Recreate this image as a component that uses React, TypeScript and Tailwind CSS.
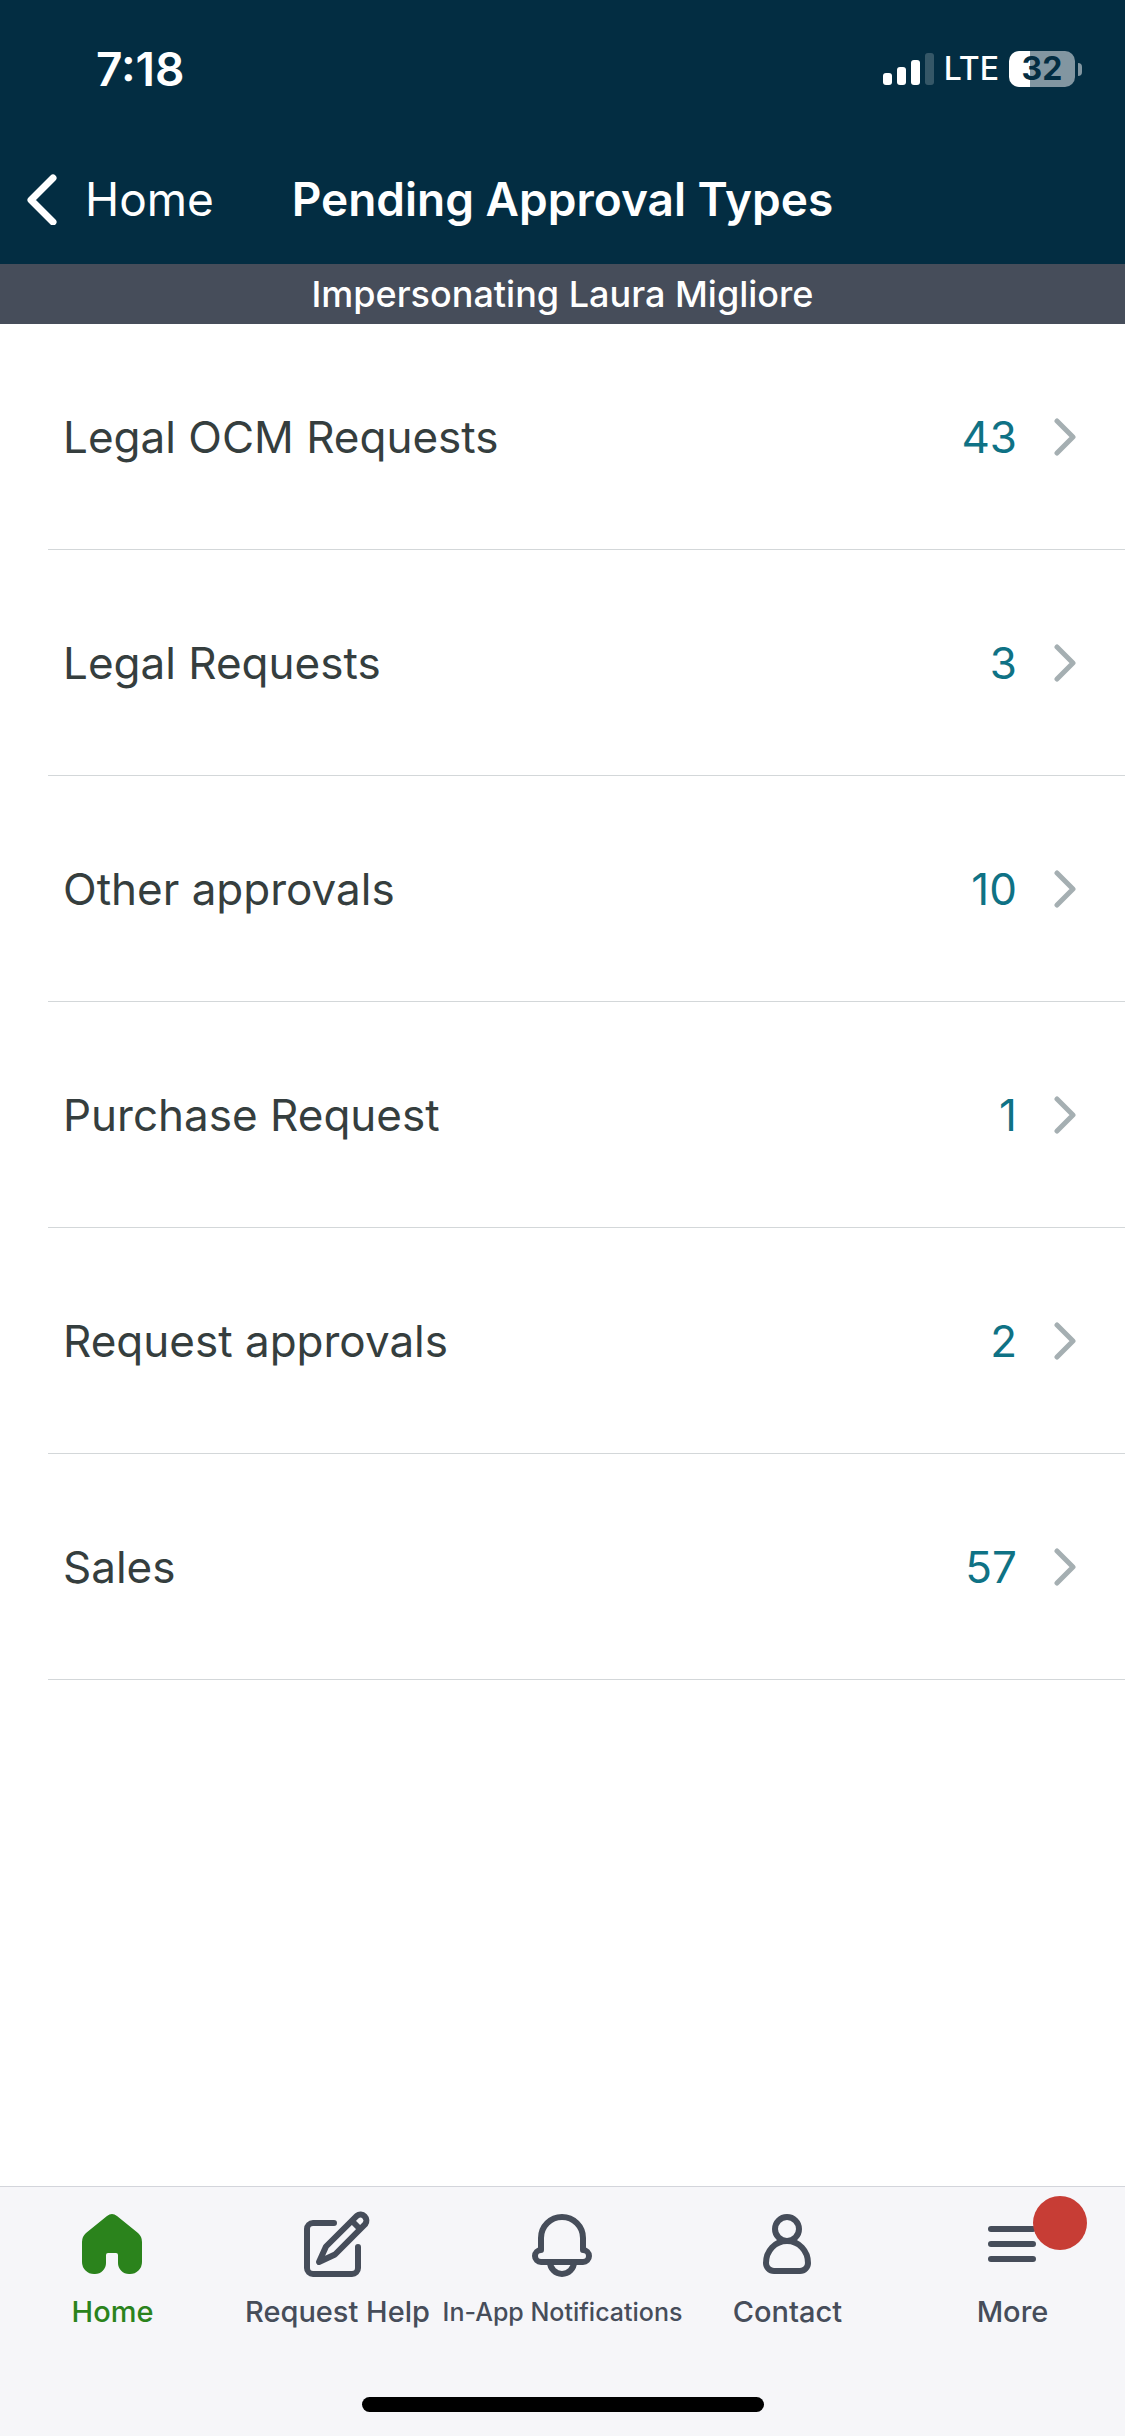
import type { ReactNode } from 'react'

type ApprovalType = { name: string; count: number }

const approvalTypes: ApprovalType[] = [
  { name: 'Legal OCM Requests', count: 43 },
  { name: 'Legal Requests', count: 3 },
  { name: 'Other approvals', count: 10 },
  { name: 'Purchase Request', count: 1 },
  { name: 'Request approvals', count: 2 },
  { name: 'Sales', count: 57 },
]

function TabIcon({ children }: { children: ReactNode }) {
  return (
    <svg viewBox="0 0 73 72" className="h-[72px] w-[73px]" fill="none" stroke="currentColor" strokeWidth="6" strokeLinecap="round" strokeLinejoin="round" aria-hidden="true">
      {children}
    </svg>
  )
}

const tabs = [
  {
    label: 'Home',
    active: true,
    icon: (
      <path
        fill="currentColor"
        stroke="none"
        d="M31 8a8 8 0 0 1 10 0L62 25Q66 28.5 66 34V54a12 12 0 0 1-12 12H53a11 11 0 0 1-11-11V47a2 2 0 0 0-2-2H32a2 2 0 0 0-2 2V55a11 11 0 0 1-11 11H18a12 12 0 0 1-12-12V34Q6 28.5 10 25Z"
      />
    ),
  },
  {
    label: 'Request Help',
    icon: (
      <>
        <path d="M33 15H12a6 6 0 0 0-6 6V60a6 6 0 0 0 6 6H51a6 6 0 0 0 6-6V39" />
        <path d="M55.8 7.8a6 6 0 0 1 8.4 8.4L34 46.5L18 54L25 38.5Z" />
        <path d="M51 13L59 21" strokeLinecap="butt" />
      </>
    ),
  },
  {
    label: 'In-App Notifications',
    compact: true,
    icon: (
      <>
        <path d="M15 30a21 21 0 0 1 42 0V42a6 6 0 0 1 0 12H15a6 6 0 0 1 0-12Z" />
        <path d="M24 54a12 12 0 0 0 24 0" />
      </>
    ),
  },
  {
    label: 'Contact',
    icon: (
      <>
        <circle cx="36" cy="21" r="12" />
        <path d="M36 33C24 33 15 43 15 55a8 8 0 0 0 8 8H49a8 8 0 0 0 8-8C57 43 48 33 36 33Z" />
      </>
    ),
  },
  {
    label: 'More',
    badge: true,
    icon: <path d="M15 21H57M15 36H57M15 51H57" />,
  },
]

function StatusBar() {
  return (
    <div className="flex h-[134px] items-center justify-between pt-1 pr-[43px] pl-24">
      <span className="text-[46px] font-semibold">7:18</span>
      <div className="flex items-center gap-2.5">
        <svg viewBox="0 0 51 32" className="h-8 w-[51px]" fill="currentColor" aria-hidden="true">
          <rect x="0" y="20" width="9" height="12" rx="3" />
          <rect x="14" y="14" width="9" height="18" rx="3" />
          <rect x="28" y="7" width="9" height="25" rx="3" />
          <rect x="42" y="0" width="9" height="32" rx="3" opacity="0.2" />
        </svg>
        <span className="text-[32px] font-medium">LTE</span>
        <div className="flex items-center gap-[3px]">
          <div className="flex h-9 w-[66px] items-center justify-center rounded-[10px] bg-linear-to-r from-white from-32% to-[#8296a1] to-32% text-[32px] font-bold text-[#032d42]">
            32
          </div>
          <div className="h-[13px] w-1 rounded-r-full bg-[#8296a1]" />
        </div>
      </div>
    </div>
  )
}

export default function App() {
  return (
    <div className="flex min-h-screen flex-col bg-white font-['Inter','Liberation_Sans',sans-serif]">
      <header className="bg-[#032d42] text-white">
        <StatusBar />
        <div className="grid h-[130px] grid-cols-[1fr_auto_1fr] items-center">
          <button className="flex items-center gap-7 pl-[25px] text-[46px]">
            <svg viewBox="0 0 32 52" className="h-[52px] w-8" fill="none" stroke="currentColor" strokeWidth="7" strokeLinecap="round" strokeLinejoin="round" aria-hidden="true">
              <path d="M28 5L6 27L28 49" />
            </svg>
            Home
          </button>
          <h1 className="text-[46px] font-semibold">Pending Approval Types</h1>
        </div>
      </header>

      <div className="flex h-[60px] items-center justify-center bg-[#464d5a] text-[36px] font-medium text-white">
        Impersonating Laura Migliore
      </div>

      <main className="flex-1">
        <ul className="pl-12">
          {approvalTypes.map(type => (
            <li key={type.name} className="border-b border-[#d3d7d9]">
              <button className="flex h-[225px] w-full items-center pr-12 pl-[15px] text-[44px]">
                <span className="flex-1 text-left text-[#353e3e]">{type.name}</span>
                <span className="text-[#0f7285]">{type.count}</span>
                <svg viewBox="0 0 24 38" className="ml-9 h-[38px] w-6" fill="none" stroke="#a5afb2" strokeWidth="5" strokeLinecap="round" strokeLinejoin="round" aria-hidden="true">
                  <path d="M4 3L20 19L4 35" />
                </svg>
              </button>
            </li>
          ))}
        </ul>
      </main>

      <footer className="border-t border-[#d3d5db] bg-[#f6f6f9] pb-6">
        <nav className="grid grid-cols-5 pt-[21px]">
          {tabs.map(tab => (
            <button key={tab.label} className={`flex flex-col items-center gap-3.5 ${tab.active ? 'text-[#2b831c]' : 'text-[#464d5a]'}`}>
              <span className="relative">
                <TabIcon>{tab.icon}</TabIcon>
                {tab.badge && <span className="absolute -top-3 left-[57px] size-[54px] rounded-full bg-[#c73d35]" />}
              </span>
              <span className={`leading-9 font-medium whitespace-nowrap ${tab.compact ? 'text-[25px]' : 'text-[29px]'}`}>{tab.label}</span>
            </button>
          ))}
        </nav>
        <div className="mx-auto mt-[67px] h-[15px] w-[402px] rounded-full bg-black" />
      </footer>
    </div>
  )
}
